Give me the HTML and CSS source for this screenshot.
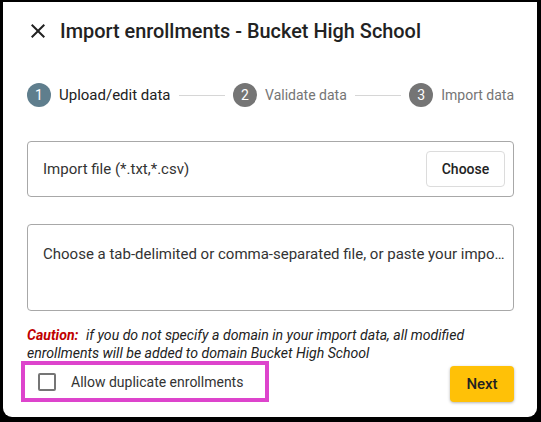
FILE: index.html
```html
<!DOCTYPE html>
<html>
<head>
<meta charset="utf-8">
<link rel="stylesheet" href="styles.css">
</head>
<body>
<div class="dialog">
  <div class="header">
    <svg class="close" width="24" height="24" viewBox="0 0 24 24"><path d="M19 6.41L17.59 5 12 10.59 6.41 5 5 6.41 10.59 12 5 17.59 6.41 19 12 13.41 17.59 19 19 17.59 13.41 12z" fill="#222"/></svg>
    <div class="title">Import enrollments - Bucket High School</div>
  </div>
  <div class="stepper">
    <div class="step active"><span class="num">1</span><span class="label">Upload/edit data</span></div>
    <div class="line"></div>
    <div class="step"><span class="num">2</span><span class="label">Validate data</span></div>
    <div class="line"></div>
    <div class="step"><span class="num">3</span><span class="label">Import data</span></div>
  </div>
  <div class="filefield">
    <span class="filelabel">Import file (*.txt,*.csv)</span>
    <button class="choose">Choose</button>
  </div>
  <div class="textarea">
    <div class="placeholder">Choose a tab-delimited or comma-separated file, or paste your import data here</div>
  </div>
  <p class="caution"><span class="warn">Caution:</span> if you do not specify a domain in your import data, all modified enrollments will be added to domain Bucket High School</p>
  <div class="footer">
    <label class="dup"><span class="box"></span><span class="duptext">Allow duplicate enrollments</span></label>
    <button class="next">Next</button>
  </div>
</div>
</body>
</html>
```
FILE: styles.css
```css
html, body {
  margin: 0;
  padding: 0;
  background: #000;
}
body {
  font-family: Roboto, "Liberation Sans", sans-serif;
  color: #222;
}
.dialog {
  box-sizing: border-box;
  width: 534px;
  height: 415px;
  margin: 2px 0 0 3px;
  background: #fff;
  border-radius: 0 0 9px 9px;
  padding: 17px 23px 15px 24px;
  display: flex;
  flex-direction: column;
}
.header {
  display: flex;
  align-items: center;
  height: 24px;
}
.close {
  margin-left: -1px;
  margin-right: 9px;
  display: block;
}
.title {
  font-size: 19.9px;
  font-weight: 500;
  color: #222;
  margin-left: 1px;
}
.stepper {
  display: flex;
  align-items: center;
  height: 24px;
  margin-top: 40px;
}
.step {
  display: flex;
  align-items: center;
  color: #757575;
  font-size: 14px;
}
.num {
  width: 24px;
  height: 24px;
  border-radius: 50%;
  background: #757575;
  color: #fff;
  font-size: 14px;
  display: flex;
  align-items: center;
  justify-content: center;
  margin-right: 8px;
}
.step.active { color: #222; font-size: 15px; }
.step.active .num { background: #5f7e8d; }
.line {
  flex: 1;
  height: 1px;
  background: #d6d6d6;
  margin: 0 8px;
}
.filefield {
  box-sizing: border-box;
  margin-top: 34px;
  height: 56px;
  border: 1px solid #a8a8a8;
  border-radius: 4px;
  display: flex;
  align-items: center;
  justify-content: space-between;
  padding: 0 8px 0 15px;
}
.filelabel {
  font-size: 15px;
  color: #333;
}
.choose {
  box-sizing: border-box;
  width: 79px;
  height: 36px;
  background: #fff;
  border: 1px solid #dcdcdc;
  border-radius: 4px;
  font-family: Roboto, "Liberation Sans", sans-serif;
  font-size: 14px;
  font-weight: 500;
  color: #222;
}
.textarea {
  box-sizing: border-box;
  margin-top: 27px;
  height: 87px;
  border: 1px solid #a8a8a8;
  border-radius: 4px;
  padding: 19px 8px 0 15px;
}
.placeholder {
  font-size: 15px;
  line-height: 20px;
  color: #333;
  white-space: nowrap;
  overflow: hidden;
  text-overflow: ellipsis;
}
.caution {
  margin: 15px 0 0 0;
  font-size: 14.1px;
  line-height: 18px;
  font-style: italic;
  color: #222;
}
.warn {
  display: inline-block;
  color: #c00000;
  font-weight: 700;
  margin-right: 4px;
}
.footer {
  display: flex;
  align-items: flex-end;
  justify-content: space-between;
  height: 40px;
}
.dup {
  box-sizing: border-box;
  display: flex;
  align-items: center;
  width: 248px;
  height: 41px;
  margin-left: -6px;
  border: 4px solid #dd44cc;
  padding-left: 13px;
}
.box {
  box-sizing: border-box;
  width: 18px;
  height: 18px;
  border: 2px solid #757575;
  border-radius: 2px;
  margin-right: 15px;
}
.duptext {
  font-size: 14px;
  color: #333;
}
.next {
  width: 64px;
  height: 36px;
  border: none;
  border-radius: 4px;
  background: #ffc107;
  box-shadow: 0 1px 3px rgba(0,0,0,0.3);
  font-family: Roboto, "Liberation Sans", sans-serif;
  font-size: 15px;
  font-weight: 500;
  color: #222;
}
```
